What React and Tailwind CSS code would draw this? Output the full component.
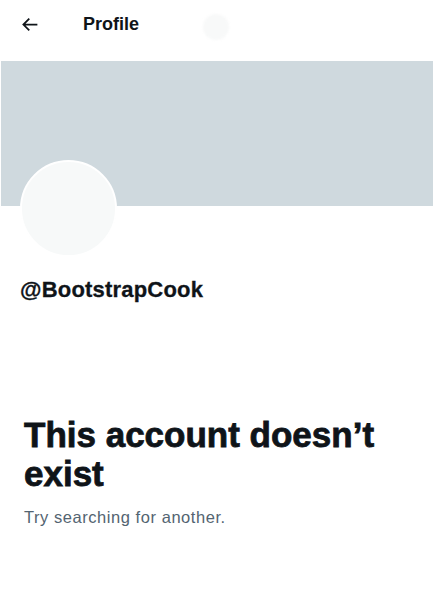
export default function App() {
  const font = { fontFamily: '"Liberation Sans", Arial, sans-serif' };
  return (
    <div className="w-[435px] h-[600px] bg-white text-[#0f1419] overflow-hidden" style={font}>
      <div className="h-[48px] flex items-center">
        <svg viewBox="0 0 24 24" className="w-[21px] h-[21px] ml-[19px] fill-[#0f1419]">
          <path d="M7.414 13l5.043 5.04-1.414 1.42L3.586 12l7.457-7.46 1.414 1.42L7.414 11H21v2H7.414z" />
        </svg>
        <div className="ml-[43px] text-[18px] font-bold leading-[21px]">Profile</div>
        <div className="ml-[64px] mt-[5px] w-[26px] h-[26px] rounded-full bg-[#f8f9f9] blur-[1px]" />
      </div>
      <div className="h-[13px]" />
      <div className="ml-[1px] w-[432px] h-[145px] bg-[#cfd9de]" />
      <div className="ml-[20px] mt-[-46px] w-[97px] h-[97px] rounded-full border-2 border-white bg-[#f7f9f9]" />
      <div className="ml-[20px] mt-[19px] text-[22px] font-bold leading-[28px] tracking-[0.2px] [-webkit-text-stroke:0.3px_#0f1419]">@BootstrapCook</div>
      <div className="ml-[24px] mt-[111px] text-[35px] font-bold leading-[39px] [-webkit-text-stroke:0.8px_#0f1419]">
        This account doesn’t<br />exist
      </div>
      <div className="ml-[24px] mt-[14px] text-[16.5px] leading-[20px] text-[#536471] tracking-[0.55px]">
        Try searching for another.
      </div>
    </div>
  );
}
